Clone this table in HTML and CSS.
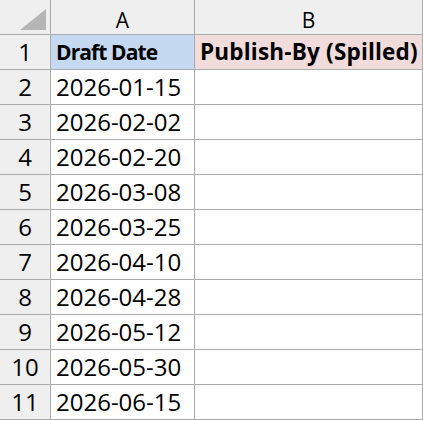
FILE: index.html
```html
<!DOCTYPE html>
<html lang="en">
<head>
    <meta charset="UTF-8">
    <title>Publish-By</title>
    <link rel="stylesheet" href="styles.css">
</head>
<body>
<div class="sheet">
    <div class="corner"><span class="tri"></span></div>
    <div class="colhead">A</div>
    <div class="colhead">B</div>

    <div class="rowhead">1</div>
    <div class="cell head-a">Draft Date</div>
    <div class="cell head-b">Publish-By (Spilled)</div>

    <div class="rowhead">2</div><div class="cell">2026-01-15</div><div class="cell"></div>
    <div class="rowhead">3</div><div class="cell">2026-02-02</div><div class="cell"></div>
    <div class="rowhead">4</div><div class="cell">2026-02-20</div><div class="cell"></div>
    <div class="rowhead">5</div><div class="cell">2026-03-08</div><div class="cell"></div>
    <div class="rowhead">6</div><div class="cell">2026-03-25</div><div class="cell"></div>
    <div class="rowhead">7</div><div class="cell">2026-04-10</div><div class="cell"></div>
    <div class="rowhead">8</div><div class="cell">2026-04-28</div><div class="cell"></div>
    <div class="rowhead">9</div><div class="cell">2026-05-12</div><div class="cell"></div>
    <div class="rowhead">10</div><div class="cell">2026-05-30</div><div class="cell"></div>
    <div class="rowhead">11</div><div class="cell">2026-06-15</div><div class="cell"></div>
</div>
</body>
</html>
```

FILE: styles.css
```css
html,body,div{
    margin: 0;
    padding: 0;
}
body{
    background: #ffffff;
    font-family: "Open Sans", "Liberation Sans", sans-serif;
    color: #000000;
}
.sheet{
    display: grid;
    grid-template-columns: 51px 144px 228px;
    grid-auto-rows: 35px;
    width: 423px;
}
.sheet > div{
    box-sizing: border-box;
    border-right: 1px solid #ababab;
    border-bottom: 1px solid #ababab;
}
.corner{
    background: #efefef;
    position: relative;
}
.corner .tri{
    position: absolute;
    right: 4px;
    bottom: 4px;
    width: 0;
    height: 0;
    border-left: 26px solid transparent;
    border-bottom: 21px solid #b5b5b5;
}
.colhead{
    background: #efefef;
    font-size: 21px;
    line-height: 40px;
    text-align: center;
}
.rowhead{
    background: #efefef;
    font-size: 24px;
    line-height: 34px;
    text-align: center;
}
.cell{
    font-size: 24px;
    line-height: 34px;
    padding-left: 5px;
    white-space: nowrap;
}
.head-a,
.head-b{
    font-weight: bold;
}
.head-a{
    background: #c5d9f1;
    font-size: 21px;
    letter-spacing: -0.9px;
}
.head-b{
    background: #f2dcdb;
    font-size: 22.5px;
    letter-spacing: 0.2px;
}
```
